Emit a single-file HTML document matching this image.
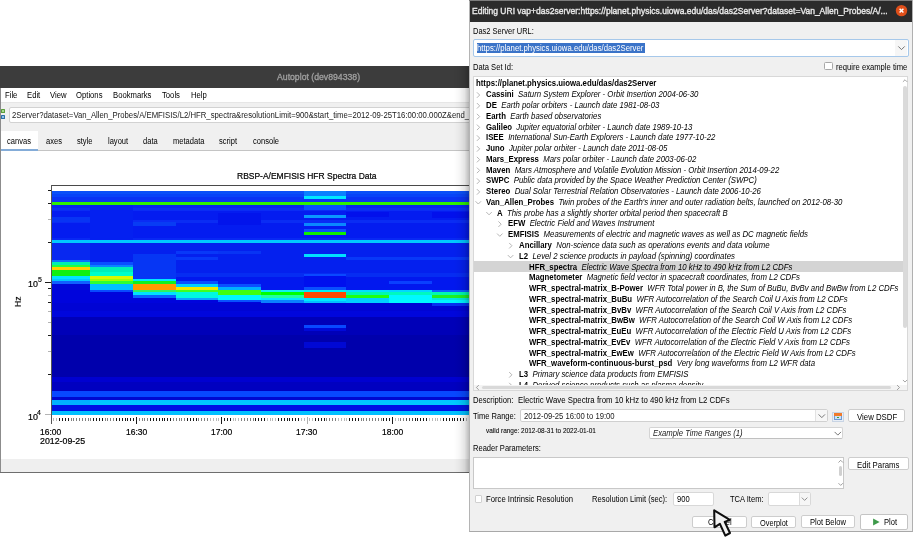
<!DOCTYPE html>
<html><head><meta charset="utf-8">
<style>
html,body{margin:0;padding:0;}
body{width:913px;height:538px;position:relative;overflow:hidden;background:#fff;font-family:"Liberation Sans",sans-serif;color:#1a1a1a;}
.a{position:absolute;}
.t{position:absolute;white-space:pre;will-change:transform;}
.t b{font-weight:bold;}
.t i{font-style:italic;}
</style></head><body>
<div class="a" style="left:0.00px;top:66.00px;width:470.00px;height:21.50px;background:#3c3c3c"></div>
<div class="t " style="left:277.40px;top:73.34px;font-size:8.7px;line-height:8.7px;transform:scaleY(1.08);transform-origin:0 7.36px;color:#a0a0a0;-webkit-text-stroke:0.3px #a0a0a0">Autoplot (dev894338)</div>
<div class="a" style="left:0.00px;top:87.50px;width:1.00px;height:385.00px;background:#8c8c8c"></div>
<div class="a" style="left:1.00px;top:87.50px;width:469.00px;height:14.50px;background:#ffffff"></div>
<div class="t " style="left:4.80px;top:92.18px;font-size:7.7px;line-height:7.7px;transform:scaleY(1.15);transform-origin:0 6.52px;color:#000">File</div>
<div class="t " style="left:26.80px;top:92.18px;font-size:7.7px;line-height:7.7px;transform:scaleY(1.15);transform-origin:0 6.52px;color:#000">Edit</div>
<div class="t " style="left:50.10px;top:92.18px;font-size:7.7px;line-height:7.7px;transform:scaleY(1.15);transform-origin:0 6.52px;color:#000">View</div>
<div class="t " style="left:76.40px;top:92.18px;font-size:7.7px;line-height:7.7px;transform:scaleY(1.15);transform-origin:0 6.52px;color:#000">Options</div>
<div class="t " style="left:113.00px;top:92.18px;font-size:7.7px;line-height:7.7px;transform:scaleY(1.15);transform-origin:0 6.52px;color:#000">Bookmarks</div>
<div class="t " style="left:162.30px;top:92.18px;font-size:7.7px;line-height:7.7px;transform:scaleY(1.15);transform-origin:0 6.52px;color:#000">Tools</div>
<div class="t " style="left:190.50px;top:92.18px;font-size:7.7px;line-height:7.7px;transform:scaleY(1.15);transform-origin:0 6.52px;color:#000">Help</div>
<div class="a" style="left:1.00px;top:102.00px;width:469.00px;height:1.00px;background:#e6e6e6"></div>
<div class="a" style="left:1.00px;top:103.00px;width:469.00px;height:28.00px;background:#f0f0f0"></div>
<div class="a" style="left:0.90px;top:109.00px;width:4.30px;height:4.10px;background:#5a9e3a;border-radius:0.5px"></div>
<div class="a" style="left:0.90px;top:115.00px;width:4.30px;height:3.70px;background:#2d6ea6;border-radius:0.5px"></div>
<div class="a" style="left:2.00px;top:110.10px;width:2.10px;height:1.90px;background:#a8d890"></div>
<div class="a" style="left:2.00px;top:116.00px;width:2.10px;height:1.70px;background:#8cc0e8"></div>
<div class="a" style="left:8.55px;top:107.00px;width:470.00px;height:15.60px;background:#fff;border:1px solid #d2d2d2;border-radius:2px;box-sizing:border-box"></div>
<div class="t " style="left:11.90px;top:112.24px;font-size:7.75px;line-height:7.75px;transform:scaleY(1.15);transform-origin:0 6.56px;color:#1a1a1a">2Server?dataset=Van_Allen_Probes/A/EMFISIS/L2/HFR_spectra&amp;resolutionLimit=900&amp;start_time=2012-09-25T16:00:00.000Z&amp;end_time=2012-09-25T19:00:00.000Z</div>
<div class="a" style="left:1.00px;top:130.90px;width:469.00px;height:19.50px;background:#f0f0f0"></div>
<div class="a" style="left:1.00px;top:130.90px;width:37.00px;height:18.10px;background:#fff"></div>
<div class="a" style="left:1.00px;top:149.00px;width:37.00px;height:1.80px;background:#84acd8"></div>
<div class="a" style="left:38.00px;top:150.00px;width:432.00px;height:1.00px;background:#c4c4c4"></div>
<div class="t " style="left:7.40px;top:138.11px;font-size:7.55px;line-height:7.55px;transform:scaleY(1.2);transform-origin:0 6.39px;color:#000">canvas</div>
<div class="t " style="left:45.50px;top:138.11px;font-size:7.55px;line-height:7.55px;transform:scaleY(1.2);transform-origin:0 6.39px;color:#000">axes</div>
<div class="t " style="left:76.70px;top:138.11px;font-size:7.55px;line-height:7.55px;transform:scaleY(1.2);transform-origin:0 6.39px;color:#000">style</div>
<div class="t " style="left:107.60px;top:138.11px;font-size:7.55px;line-height:7.55px;transform:scaleY(1.2);transform-origin:0 6.39px;color:#000">layout</div>
<div class="t " style="left:142.60px;top:138.11px;font-size:7.55px;line-height:7.55px;transform:scaleY(1.2);transform-origin:0 6.39px;color:#000">data</div>
<div class="t " style="left:172.80px;top:138.11px;font-size:7.55px;line-height:7.55px;transform:scaleY(1.2);transform-origin:0 6.39px;color:#000">metadata</div>
<div class="t " style="left:218.90px;top:138.11px;font-size:7.55px;line-height:7.55px;transform:scaleY(1.2);transform-origin:0 6.39px;color:#000">script</div>
<div class="t " style="left:252.50px;top:138.11px;font-size:7.55px;line-height:7.55px;transform:scaleY(1.2);transform-origin:0 6.39px;color:#000">console</div>
<div class="a" style="left:1.00px;top:458.70px;width:469.00px;height:13.20px;background:#efefef"></div>
<div class="a" style="left:0.00px;top:471.60px;width:470.00px;height:1.00px;background:#6e6e6e"></div>
<svg class="a" style="left:0;top:0" width="470" height="538" shape-rendering="crispEdges"><rect x="51.1" y="191" width="418.9" height="2.70" fill="#0a50f8"/>
<rect x="51.1" y="193.7" width="418.9" height="2.80" fill="#0844f8"/>
<rect x="51.1" y="196.5" width="418.9" height="5.50" fill="#0a34f4"/>
<rect x="51.1" y="202" width="418.9" height="3.00" fill="#30f000"/>
<rect x="51.1" y="205" width="418.9" height="3.00" fill="#0824f0"/>
<rect x="51.1" y="208" width="418.9" height="2.50" fill="#0a2cf4"/>
<rect x="51.1" y="210.5" width="418.9" height="9.50" fill="#041cf0"/>
<rect x="51.1" y="220" width="418.9" height="2.50" fill="#0a2cf4"/>
<rect x="51.1" y="222.5" width="418.9" height="15.50" fill="#041cf0"/>
<rect x="51.1" y="238" width="418.9" height="2.20" fill="#0828f4"/>
<rect x="51.1" y="240.2" width="418.9" height="2.90" fill="#00c8ff"/>
<rect x="51.1" y="243.1" width="418.9" height="29.90" fill="#0420ee"/>
<rect x="51.1" y="273" width="418.9" height="4.00" fill="#062cf2"/>
<rect x="51.1" y="277" width="418.9" height="13.00" fill="#0218ee"/>
<rect x="51.1" y="290" width="418.9" height="13.00" fill="#0004dc"/>
<rect x="51.1" y="303" width="418.9" height="8.00" fill="#0004d4"/>
<rect x="51.1" y="311" width="418.9" height="6.00" fill="#0006dc"/>
<rect x="51.1" y="317" width="418.9" height="18.00" fill="#0000b8"/>
<rect x="51.1" y="335" width="418.9" height="42.00" fill="#0000ac"/>
<rect x="51.1" y="377" width="418.9" height="5.40" fill="#0000d0"/>
<rect x="51.1" y="382.4" width="418.9" height="8.30" fill="#0000c0"/>
<rect x="51.1" y="390.7" width="418.9" height="6.30" fill="#0848ff"/>
<rect x="51.1" y="397" width="418.9" height="3.10" fill="#0008d0"/>
<rect x="51.1" y="400.1" width="418.9" height="5.20" fill="#00b0ff"/>
<rect x="51.1" y="405.3" width="418.9" height="5.20" fill="#0010e4"/>
<rect x="51.1" y="410.5" width="418.9" height="4.40" fill="#00c0ff"/>
<rect x="51.1" y="217" width="39.20" height="5.00" fill="#0834f4"/>
<rect x="51.1" y="243.1" width="39.20" height="16.90" fill="#0828f0"/>
<rect x="51.1" y="260" width="39.20" height="2.00" fill="#0a70ff"/>
<rect x="51.1" y="262" width="39.20" height="3.00" fill="#00f0b0"/>
<rect x="51.1" y="265" width="39.20" height="2.40" fill="#20ff40"/>
<rect x="51.1" y="267.4" width="39.20" height="3.00" fill="#ffd000"/>
<rect x="51.1" y="270.4" width="39.20" height="5.60" fill="#10f010"/>
<rect x="51.1" y="276" width="39.20" height="2.50" fill="#00e4ff"/>
<rect x="51.1" y="278.5" width="39.20" height="2.50" fill="#00c8ff"/>
<rect x="51.1" y="281" width="39.20" height="3.00" fill="#1060ff"/>
<rect x="51.1" y="284" width="39.20" height="6.00" fill="#0008d8"/>
<rect x="90.3" y="205" width="42.66" height="35.20" fill="#0420f0"/>
<rect x="90.3" y="262" width="42.66" height="2.60" fill="#0a50ff"/>
<rect x="90.3" y="264.6" width="42.66" height="2.60" fill="#0a84ff"/>
<rect x="90.3" y="267.2" width="42.66" height="4.80" fill="#00f0b8"/>
<rect x="90.3" y="272" width="42.66" height="4.00" fill="#00ffc8"/>
<rect x="90.3" y="276" width="42.66" height="3.00" fill="#d8f800"/>
<rect x="90.3" y="279" width="42.66" height="2.00" fill="#a0ff00"/>
<rect x="90.3" y="281" width="42.66" height="3.00" fill="#30ff30"/>
<rect x="90.3" y="284" width="42.66" height="5.50" fill="#00c0ff"/>
<rect x="90.3" y="289.5" width="42.66" height="2.50" fill="#0848ff"/>
<rect x="90.3" y="400.1" width="42.66" height="5.20" fill="#00c8ff"/>
<rect x="133.0" y="222.3" width="42.66" height="3.50" fill="#083cf4"/>
<rect x="133.0" y="254" width="42.66" height="24.60" fill="#0636f4"/>
<rect x="133.0" y="278.6" width="42.66" height="2.40" fill="#00e8ff"/>
<rect x="133.0" y="281" width="42.66" height="3.00" fill="#10f020"/>
<rect x="133.0" y="284" width="42.66" height="5.50" fill="#ff9800"/>
<rect x="133.0" y="289.5" width="42.66" height="2.50" fill="#30f060"/>
<rect x="133.0" y="292" width="42.66" height="3.00" fill="#00e0ff"/>
<rect x="133.0" y="295" width="42.66" height="3.00" fill="#0860ff"/>
<rect x="133.0" y="400.1" width="42.66" height="5.20" fill="#00c8ff"/>
<rect x="175.6" y="251" width="42.66" height="3.00" fill="#0838f8"/>
<rect x="175.6" y="257" width="42.66" height="2.60" fill="#0838f8"/>
<rect x="175.6" y="281.3" width="42.66" height="2.70" fill="#0850ff"/>
<rect x="175.6" y="284" width="42.66" height="2.80" fill="#00d0ff"/>
<rect x="175.6" y="286.8" width="42.66" height="3.50" fill="#f0e800"/>
<rect x="175.6" y="290.3" width="42.66" height="1.70" fill="#40ff20"/>
<rect x="175.6" y="292" width="42.66" height="6.40" fill="#00f8e0"/>
<rect x="175.6" y="298.4" width="42.66" height="2.00" fill="#0aa0ff"/>
<rect x="175.6" y="400.1" width="42.66" height="5.20" fill="#00c8ff"/>
<rect x="218.3" y="213" width="42.66" height="12.00" fill="#0214ec"/>
<rect x="218.3" y="251" width="42.66" height="3.00" fill="#0834f4"/>
<rect x="218.3" y="284" width="42.66" height="2.80" fill="#0a50ff"/>
<rect x="218.3" y="286.8" width="42.66" height="3.20" fill="#00b0ff"/>
<rect x="218.3" y="290" width="42.66" height="5.00" fill="#40ff10"/>
<rect x="218.3" y="295" width="42.66" height="4.70" fill="#00f8ff"/>
<rect x="218.3" y="299.7" width="42.66" height="2.30" fill="#0850ff"/>
<rect x="218.3" y="400.1" width="42.66" height="5.20" fill="#00c8ff"/>
<rect x="260.9" y="289.8" width="42.66" height="2.20" fill="#10f0f0"/>
<rect x="260.9" y="292" width="42.66" height="2.80" fill="#00ff00"/>
<rect x="260.9" y="294.8" width="42.66" height="3.20" fill="#20ffa0"/>
<rect x="260.9" y="298" width="42.66" height="2.00" fill="#00e8ff"/>
<rect x="260.9" y="300" width="42.66" height="3.00" fill="#0a80ff"/>
<rect x="260.9" y="400.1" width="42.66" height="5.20" fill="#00c8ff"/>
<rect x="303.6" y="191" width="42.66" height="5.00" fill="#0a80ff"/>
<rect x="303.6" y="196" width="42.66" height="3.00" fill="#00e8ff"/>
<rect x="303.6" y="205" width="42.66" height="5.00" fill="#0850ff"/>
<rect x="303.6" y="215" width="42.66" height="3.00" fill="#0a98ff"/>
<rect x="303.6" y="223" width="42.66" height="3.00" fill="#0a88ff"/>
<rect x="303.6" y="229" width="42.66" height="2.50" fill="#0a50ff"/>
<rect x="303.6" y="231.8" width="42.66" height="3.00" fill="#10f000"/>
<rect x="303.6" y="254" width="42.66" height="3.00" fill="#00e0ff"/>
<rect x="303.6" y="273.5" width="42.66" height="2.50" fill="#0a48ff"/>
<rect x="303.6" y="276" width="42.66" height="11.00" fill="#0010ee"/>
<rect x="303.6" y="287" width="42.66" height="2.60" fill="#0850ff"/>
<rect x="303.6" y="289.6" width="42.66" height="2.40" fill="#00f0f0"/>
<rect x="303.6" y="292" width="42.66" height="6.00" fill="#ff4800"/>
<rect x="303.6" y="298" width="42.66" height="2.50" fill="#00e8ff"/>
<rect x="303.6" y="300.5" width="42.66" height="2.70" fill="#00c0ff"/>
<rect x="303.6" y="325" width="42.66" height="3.00" fill="#0848ff"/>
<rect x="303.6" y="328" width="42.66" height="3.00" fill="#0008d8"/>
<rect x="303.6" y="341.7" width="42.66" height="6.10" fill="#0008d4"/>
<rect x="303.6" y="400.1" width="42.66" height="5.20" fill="#00c8ff"/>
<rect x="346.3" y="212" width="42.66" height="5.00" fill="#0210ec"/>
<rect x="346.3" y="257" width="42.66" height="3.00" fill="#0838f8"/>
<rect x="346.3" y="289.9" width="42.66" height="2.10" fill="#00e0ff"/>
<rect x="346.3" y="292" width="42.66" height="2.60" fill="#00f8b0"/>
<rect x="346.3" y="294.6" width="42.66" height="3.40" fill="#20ff10"/>
<rect x="346.3" y="298" width="42.66" height="4.70" fill="#00d0ff"/>
<rect x="346.3" y="400.1" width="42.66" height="5.20" fill="#00c8ff"/>
<rect x="388.9" y="257" width="42.66" height="3.00" fill="#0838f8"/>
<rect x="388.9" y="281.3" width="42.66" height="2.90" fill="#0a40ff"/>
<rect x="388.9" y="289.9" width="42.66" height="2.10" fill="#00d8ff"/>
<rect x="388.9" y="292" width="42.66" height="2.60" fill="#00f8c0"/>
<rect x="388.9" y="294.6" width="42.66" height="8.40" fill="#00f8ff"/>
<rect x="388.9" y="400.1" width="42.66" height="5.20" fill="#00c8ff"/>
<rect x="431.6" y="212" width="38.42" height="6.00" fill="#0210ec"/>
<rect x="431.6" y="257" width="38.42" height="3.00" fill="#0838f8"/>
<rect x="431.6" y="289.9" width="38.42" height="2.10" fill="#0a60ff"/>
<rect x="431.6" y="292" width="38.42" height="2.60" fill="#00f8b0"/>
<rect x="431.6" y="294.6" width="38.42" height="3.40" fill="#20f020"/>
<rect x="431.6" y="298" width="38.42" height="2.00" fill="#00e8e0"/>
<rect x="431.6" y="300" width="38.42" height="3.00" fill="#00f4ff"/>
<rect x="431.6" y="303" width="38.42" height="3.00" fill="#0630f0"/>
<rect x="431.6" y="400.1" width="38.42" height="5.20" fill="#00c8ff"/></svg>
<svg class="a" style="left:0;top:0" width="470" height="538"><line x1="51" y1="185.5" x2="470" y2="185.5" stroke="#4a4a4a" stroke-width="1"/>
<line x1="51.5" y1="185" x2="51.5" y2="424" stroke="#555" stroke-width="1"/>
<line x1="45" y1="414.5" x2="51" y2="414.5" stroke="#b4b4b4" stroke-width="1" shape-rendering="crispEdges"/>
<line x1="48" y1="374.5" x2="51" y2="374.5" stroke="#1a1a1a" stroke-width="1" shape-rendering="crispEdges"/>
<line x1="48" y1="351.5" x2="51" y2="351.5" stroke="#b4b4b4" stroke-width="1" shape-rendering="crispEdges"/>
<line x1="48" y1="335.5" x2="51" y2="335.5" stroke="#1a1a1a" stroke-width="1" shape-rendering="crispEdges"/>
<line x1="48" y1="322.5" x2="51" y2="322.5" stroke="#b4b4b4" stroke-width="1" shape-rendering="crispEdges"/>
<line x1="48" y1="311.5" x2="51" y2="311.5" stroke="#b4b4b4" stroke-width="1" shape-rendering="crispEdges"/>
<line x1="48" y1="302.5" x2="51" y2="302.5" stroke="#1a1a1a" stroke-width="1" shape-rendering="crispEdges"/>
<line x1="48" y1="295.5" x2="51" y2="295.5" stroke="#b4b4b4" stroke-width="1" shape-rendering="crispEdges"/>
<line x1="48" y1="288.5" x2="51" y2="288.5" stroke="#1a1a1a" stroke-width="1" shape-rendering="crispEdges"/>
<line x1="45" y1="282.5" x2="51" y2="282.5" stroke="#1a1a1a" stroke-width="1" shape-rendering="crispEdges"/>
<line x1="48" y1="242.5" x2="51" y2="242.5" stroke="#1a1a1a" stroke-width="1" shape-rendering="crispEdges"/>
<line x1="48" y1="219.5" x2="51" y2="219.5" stroke="#b4b4b4" stroke-width="1" shape-rendering="crispEdges"/>
<line x1="48" y1="203.5" x2="51" y2="203.5" stroke="#1a1a1a" stroke-width="1" shape-rendering="crispEdges"/>
<line x1="48" y1="190.5" x2="51" y2="190.5" stroke="#1a1a1a" stroke-width="1" shape-rendering="crispEdges"/>
<line x1="53.5" y1="418" x2="53.5" y2="421" stroke="#b8b8b8" stroke-width="1" shape-rendering="crispEdges"/>
<line x1="56.5" y1="418" x2="56.5" y2="421" stroke="#b8b8b8" stroke-width="1" shape-rendering="crispEdges"/>
<line x1="59.5" y1="418" x2="59.5" y2="421" stroke="#1a1a1a" stroke-width="1" shape-rendering="crispEdges"/>
<line x1="62.5" y1="418" x2="62.5" y2="421" stroke="#1a1a1a" stroke-width="1" shape-rendering="crispEdges"/>
<line x1="65.5" y1="418" x2="65.5" y2="421" stroke="#1a1a1a" stroke-width="1" shape-rendering="crispEdges"/>
<line x1="68.5" y1="418" x2="68.5" y2="421" stroke="#1a1a1a" stroke-width="1" shape-rendering="crispEdges"/>
<line x1="71.5" y1="418" x2="71.5" y2="421" stroke="#808080" stroke-width="1" shape-rendering="crispEdges"/>
<line x1="73.5" y1="418" x2="73.5" y2="421" stroke="#808080" stroke-width="1" shape-rendering="crispEdges"/>
<line x1="76.5" y1="418" x2="76.5" y2="421" stroke="#808080" stroke-width="1" shape-rendering="crispEdges"/>
<line x1="79.5" y1="418" x2="79.5" y2="421" stroke="#808080" stroke-width="1" shape-rendering="crispEdges"/>
<line x1="82.5" y1="418" x2="82.5" y2="421" stroke="#808080" stroke-width="1" shape-rendering="crispEdges"/>
<line x1="85.5" y1="418" x2="85.5" y2="421" stroke="#808080" stroke-width="1" shape-rendering="crispEdges"/>
<line x1="88.5" y1="418" x2="88.5" y2="421" stroke="#808080" stroke-width="1" shape-rendering="crispEdges"/>
<line x1="90.5" y1="418" x2="90.5" y2="421" stroke="#808080" stroke-width="1" shape-rendering="crispEdges"/>
<line x1="93.5" y1="418" x2="93.5" y2="421" stroke="#1a1a1a" stroke-width="1" shape-rendering="crispEdges"/>
<line x1="96.5" y1="418" x2="96.5" y2="421" stroke="#1a1a1a" stroke-width="1" shape-rendering="crispEdges"/>
<line x1="99.5" y1="418" x2="99.5" y2="421" stroke="#1a1a1a" stroke-width="1" shape-rendering="crispEdges"/>
<line x1="102.5" y1="418" x2="102.5" y2="421" stroke="#1a1a1a" stroke-width="1" shape-rendering="crispEdges"/>
<line x1="105.5" y1="418" x2="105.5" y2="421" stroke="#808080" stroke-width="1" shape-rendering="crispEdges"/>
<line x1="107.5" y1="418" x2="107.5" y2="421" stroke="#808080" stroke-width="1" shape-rendering="crispEdges"/>
<line x1="110.5" y1="418" x2="110.5" y2="421" stroke="#808080" stroke-width="1" shape-rendering="crispEdges"/>
<line x1="113.5" y1="418" x2="113.5" y2="421" stroke="#808080" stroke-width="1" shape-rendering="crispEdges"/>
<line x1="116.5" y1="418" x2="116.5" y2="421" stroke="#1a1a1a" stroke-width="1" shape-rendering="crispEdges"/>
<line x1="119.5" y1="418" x2="119.5" y2="421" stroke="#1a1a1a" stroke-width="1" shape-rendering="crispEdges"/>
<line x1="122.5" y1="418" x2="122.5" y2="421" stroke="#1a1a1a" stroke-width="1" shape-rendering="crispEdges"/>
<line x1="125.5" y1="418" x2="125.5" y2="421" stroke="#1a1a1a" stroke-width="1" shape-rendering="crispEdges"/>
<line x1="127.5" y1="418" x2="127.5" y2="421" stroke="#1a1a1a" stroke-width="1" shape-rendering="crispEdges"/>
<line x1="130.5" y1="418" x2="130.5" y2="421" stroke="#1a1a1a" stroke-width="1" shape-rendering="crispEdges"/>
<line x1="133.5" y1="418" x2="133.5" y2="421" stroke="#1a1a1a" stroke-width="1" shape-rendering="crispEdges"/>
<line x1="136.5" y1="417" x2="136.5" y2="424" stroke="#1a1a1a" stroke-width="1" shape-rendering="crispEdges"/>
<line x1="139.5" y1="418" x2="139.5" y2="421" stroke="#808080" stroke-width="1" shape-rendering="crispEdges"/>
<line x1="142.5" y1="418" x2="142.5" y2="421" stroke="#808080" stroke-width="1" shape-rendering="crispEdges"/>
<line x1="144.5" y1="418" x2="144.5" y2="421" stroke="#808080" stroke-width="1" shape-rendering="crispEdges"/>
<line x1="147.5" y1="418" x2="147.5" y2="421" stroke="#808080" stroke-width="1" shape-rendering="crispEdges"/>
<line x1="150.5" y1="418" x2="150.5" y2="421" stroke="#1a1a1a" stroke-width="1" shape-rendering="crispEdges"/>
<line x1="153.5" y1="418" x2="153.5" y2="421" stroke="#1a1a1a" stroke-width="1" shape-rendering="crispEdges"/>
<line x1="156.5" y1="418" x2="156.5" y2="421" stroke="#1a1a1a" stroke-width="1" shape-rendering="crispEdges"/>
<line x1="159.5" y1="418" x2="159.5" y2="421" stroke="#1a1a1a" stroke-width="1" shape-rendering="crispEdges"/>
<line x1="162.5" y1="418" x2="162.5" y2="421" stroke="#1a1a1a" stroke-width="1" shape-rendering="crispEdges"/>
<line x1="164.5" y1="418" x2="164.5" y2="421" stroke="#1a1a1a" stroke-width="1" shape-rendering="crispEdges"/>
<line x1="167.5" y1="418" x2="167.5" y2="421" stroke="#1a1a1a" stroke-width="1" shape-rendering="crispEdges"/>
<line x1="170.5" y1="418" x2="170.5" y2="421" stroke="#1a1a1a" stroke-width="1" shape-rendering="crispEdges"/>
<line x1="173.5" y1="418" x2="173.5" y2="421" stroke="#808080" stroke-width="1" shape-rendering="crispEdges"/>
<line x1="176.5" y1="418" x2="176.5" y2="421" stroke="#808080" stroke-width="1" shape-rendering="crispEdges"/>
<line x1="179.5" y1="418" x2="179.5" y2="421" stroke="#808080" stroke-width="1" shape-rendering="crispEdges"/>
<line x1="181.5" y1="418" x2="181.5" y2="421" stroke="#808080" stroke-width="1" shape-rendering="crispEdges"/>
<line x1="184.5" y1="418" x2="184.5" y2="421" stroke="#808080" stroke-width="1" shape-rendering="crispEdges"/>
<line x1="187.5" y1="418" x2="187.5" y2="421" stroke="#1a1a1a" stroke-width="1" shape-rendering="crispEdges"/>
<line x1="190.5" y1="418" x2="190.5" y2="421" stroke="#1a1a1a" stroke-width="1" shape-rendering="crispEdges"/>
<line x1="193.5" y1="418" x2="193.5" y2="421" stroke="#1a1a1a" stroke-width="1" shape-rendering="crispEdges"/>
<line x1="196.5" y1="418" x2="196.5" y2="421" stroke="#1a1a1a" stroke-width="1" shape-rendering="crispEdges"/>
<line x1="198.5" y1="418" x2="198.5" y2="421" stroke="#808080" stroke-width="1" shape-rendering="crispEdges"/>
<line x1="201.5" y1="418" x2="201.5" y2="421" stroke="#808080" stroke-width="1" shape-rendering="crispEdges"/>
<line x1="204.5" y1="418" x2="204.5" y2="421" stroke="#808080" stroke-width="1" shape-rendering="crispEdges"/>
<line x1="207.5" y1="418" x2="207.5" y2="421" stroke="#808080" stroke-width="1" shape-rendering="crispEdges"/>
<line x1="210.5" y1="418" x2="210.5" y2="421" stroke="#b8b8b8" stroke-width="1" shape-rendering="crispEdges"/>
<line x1="213.5" y1="418" x2="213.5" y2="421" stroke="#b8b8b8" stroke-width="1" shape-rendering="crispEdges"/>
<line x1="216.5" y1="418" x2="216.5" y2="421" stroke="#b8b8b8" stroke-width="1" shape-rendering="crispEdges"/>
<line x1="218.5" y1="418" x2="218.5" y2="421" stroke="#b8b8b8" stroke-width="1" shape-rendering="crispEdges"/>
<line x1="221.5" y1="417" x2="221.5" y2="424" stroke="#1a1a1a" stroke-width="1" shape-rendering="crispEdges"/>
<line x1="224.5" y1="418" x2="224.5" y2="421" stroke="#1a1a1a" stroke-width="1" shape-rendering="crispEdges"/>
<line x1="227.5" y1="418" x2="227.5" y2="421" stroke="#1a1a1a" stroke-width="1" shape-rendering="crispEdges"/>
<line x1="230.5" y1="418" x2="230.5" y2="421" stroke="#1a1a1a" stroke-width="1" shape-rendering="crispEdges"/>
<line x1="233.5" y1="418" x2="233.5" y2="421" stroke="#b8b8b8" stroke-width="1" shape-rendering="crispEdges"/>
<line x1="235.5" y1="418" x2="235.5" y2="421" stroke="#b8b8b8" stroke-width="1" shape-rendering="crispEdges"/>
<line x1="238.5" y1="418" x2="238.5" y2="421" stroke="#b8b8b8" stroke-width="1" shape-rendering="crispEdges"/>
<line x1="241.5" y1="418" x2="241.5" y2="421" stroke="#808080" stroke-width="1" shape-rendering="crispEdges"/>
<line x1="244.5" y1="418" x2="244.5" y2="421" stroke="#808080" stroke-width="1" shape-rendering="crispEdges"/>
<line x1="247.5" y1="418" x2="247.5" y2="421" stroke="#808080" stroke-width="1" shape-rendering="crispEdges"/>
<line x1="250.5" y1="418" x2="250.5" y2="421" stroke="#808080" stroke-width="1" shape-rendering="crispEdges"/>
<line x1="253.5" y1="418" x2="253.5" y2="421" stroke="#808080" stroke-width="1" shape-rendering="crispEdges"/>
<line x1="255.5" y1="418" x2="255.5" y2="421" stroke="#1a1a1a" stroke-width="1" shape-rendering="crispEdges"/>
<line x1="258.5" y1="418" x2="258.5" y2="421" stroke="#1a1a1a" stroke-width="1" shape-rendering="crispEdges"/>
<line x1="261.5" y1="418" x2="261.5" y2="421" stroke="#1a1a1a" stroke-width="1" shape-rendering="crispEdges"/>
<line x1="264.5" y1="418" x2="264.5" y2="421" stroke="#1a1a1a" stroke-width="1" shape-rendering="crispEdges"/>
<line x1="267.5" y1="418" x2="267.5" y2="421" stroke="#b8b8b8" stroke-width="1" shape-rendering="crispEdges"/>
<line x1="270.5" y1="418" x2="270.5" y2="421" stroke="#b8b8b8" stroke-width="1" shape-rendering="crispEdges"/>
<line x1="272.5" y1="418" x2="272.5" y2="421" stroke="#b8b8b8" stroke-width="1" shape-rendering="crispEdges"/>
<line x1="275.5" y1="418" x2="275.5" y2="421" stroke="#b8b8b8" stroke-width="1" shape-rendering="crispEdges"/>
<line x1="278.5" y1="418" x2="278.5" y2="421" stroke="#1a1a1a" stroke-width="1" shape-rendering="crispEdges"/>
<line x1="281.5" y1="418" x2="281.5" y2="421" stroke="#1a1a1a" stroke-width="1" shape-rendering="crispEdges"/>
<line x1="284.5" y1="418" x2="284.5" y2="421" stroke="#1a1a1a" stroke-width="1" shape-rendering="crispEdges"/>
<line x1="287.5" y1="418" x2="287.5" y2="421" stroke="#1a1a1a" stroke-width="1" shape-rendering="crispEdges"/>
<line x1="289.5" y1="418" x2="289.5" y2="421" stroke="#1a1a1a" stroke-width="1" shape-rendering="crispEdges"/>
<line x1="292.5" y1="418" x2="292.5" y2="421" stroke="#1a1a1a" stroke-width="1" shape-rendering="crispEdges"/>
<line x1="295.5" y1="418" x2="295.5" y2="421" stroke="#1a1a1a" stroke-width="1" shape-rendering="crispEdges"/>
<line x1="298.5" y1="418" x2="298.5" y2="421" stroke="#1a1a1a" stroke-width="1" shape-rendering="crispEdges"/>
<line x1="301.5" y1="418" x2="301.5" y2="421" stroke="#b8b8b8" stroke-width="1" shape-rendering="crispEdges"/>
<line x1="304.5" y1="418" x2="304.5" y2="421" stroke="#b8b8b8" stroke-width="1" shape-rendering="crispEdges"/>
<line x1="307.5" y1="417" x2="307.5" y2="424" stroke="#b0b0b0" stroke-width="1" shape-rendering="crispEdges"/>
<line x1="309.5" y1="418" x2="309.5" y2="421" stroke="#b8b8b8" stroke-width="1" shape-rendering="crispEdges"/>
<line x1="312.5" y1="418" x2="312.5" y2="421" stroke="#b8b8b8" stroke-width="1" shape-rendering="crispEdges"/>
<line x1="315.5" y1="418" x2="315.5" y2="421" stroke="#1a1a1a" stroke-width="1" shape-rendering="crispEdges"/>
<line x1="318.5" y1="418" x2="318.5" y2="421" stroke="#1a1a1a" stroke-width="1" shape-rendering="crispEdges"/>
<line x1="321.5" y1="418" x2="321.5" y2="421" stroke="#1a1a1a" stroke-width="1" shape-rendering="crispEdges"/>
<line x1="324.5" y1="418" x2="324.5" y2="421" stroke="#1a1a1a" stroke-width="1" shape-rendering="crispEdges"/>
<line x1="326.5" y1="418" x2="326.5" y2="421" stroke="#808080" stroke-width="1" shape-rendering="crispEdges"/>
<line x1="329.5" y1="418" x2="329.5" y2="421" stroke="#808080" stroke-width="1" shape-rendering="crispEdges"/>
<line x1="332.5" y1="418" x2="332.5" y2="421" stroke="#808080" stroke-width="1" shape-rendering="crispEdges"/>
<line x1="335.5" y1="418" x2="335.5" y2="421" stroke="#808080" stroke-width="1" shape-rendering="crispEdges"/>
<line x1="338.5" y1="418" x2="338.5" y2="421" stroke="#b8b8b8" stroke-width="1" shape-rendering="crispEdges"/>
<line x1="341.5" y1="418" x2="341.5" y2="421" stroke="#b8b8b8" stroke-width="1" shape-rendering="crispEdges"/>
<line x1="344.5" y1="418" x2="344.5" y2="421" stroke="#b8b8b8" stroke-width="1" shape-rendering="crispEdges"/>
<line x1="346.5" y1="418" x2="346.5" y2="421" stroke="#b8b8b8" stroke-width="1" shape-rendering="crispEdges"/>
<line x1="349.5" y1="418" x2="349.5" y2="421" stroke="#1a1a1a" stroke-width="1" shape-rendering="crispEdges"/>
<line x1="352.5" y1="418" x2="352.5" y2="421" stroke="#1a1a1a" stroke-width="1" shape-rendering="crispEdges"/>
<line x1="355.5" y1="418" x2="355.5" y2="421" stroke="#1a1a1a" stroke-width="1" shape-rendering="crispEdges"/>
<line x1="358.5" y1="418" x2="358.5" y2="421" stroke="#1a1a1a" stroke-width="1" shape-rendering="crispEdges"/>
<line x1="361.5" y1="418" x2="361.5" y2="421" stroke="#808080" stroke-width="1" shape-rendering="crispEdges"/>
<line x1="363.5" y1="418" x2="363.5" y2="421" stroke="#808080" stroke-width="1" shape-rendering="crispEdges"/>
<line x1="366.5" y1="418" x2="366.5" y2="421" stroke="#808080" stroke-width="1" shape-rendering="crispEdges"/>
<line x1="369.5" y1="418" x2="369.5" y2="421" stroke="#808080" stroke-width="1" shape-rendering="crispEdges"/>
<line x1="372.5" y1="418" x2="372.5" y2="421" stroke="#808080" stroke-width="1" shape-rendering="crispEdges"/>
<line x1="375.5" y1="418" x2="375.5" y2="421" stroke="#808080" stroke-width="1" shape-rendering="crispEdges"/>
<line x1="378.5" y1="418" x2="378.5" y2="421" stroke="#808080" stroke-width="1" shape-rendering="crispEdges"/>
<line x1="381.5" y1="418" x2="381.5" y2="421" stroke="#808080" stroke-width="1" shape-rendering="crispEdges"/>
<line x1="383.5" y1="418" x2="383.5" y2="421" stroke="#1a1a1a" stroke-width="1" shape-rendering="crispEdges"/>
<line x1="386.5" y1="418" x2="386.5" y2="421" stroke="#1a1a1a" stroke-width="1" shape-rendering="crispEdges"/>
<line x1="389.5" y1="418" x2="389.5" y2="421" stroke="#1a1a1a" stroke-width="1" shape-rendering="crispEdges"/>
<line x1="392.5" y1="417" x2="392.5" y2="424" stroke="#1a1a1a" stroke-width="1" shape-rendering="crispEdges"/>
<line x1="395.5" y1="418" x2="395.5" y2="421" stroke="#b8b8b8" stroke-width="1" shape-rendering="crispEdges"/>
<line x1="398.5" y1="418" x2="398.5" y2="421" stroke="#b8b8b8" stroke-width="1" shape-rendering="crispEdges"/>
<line x1="400.5" y1="418" x2="400.5" y2="421" stroke="#808080" stroke-width="1" shape-rendering="crispEdges"/>
<line x1="403.5" y1="418" x2="403.5" y2="421" stroke="#808080" stroke-width="1" shape-rendering="crispEdges"/>
<line x1="406.5" y1="418" x2="406.5" y2="421" stroke="#505050" stroke-width="1" shape-rendering="crispEdges"/>
<line x1="409.5" y1="418" x2="409.5" y2="421" stroke="#505050" stroke-width="1" shape-rendering="crispEdges"/>
<line x1="412.5" y1="418" x2="412.5" y2="421" stroke="#505050" stroke-width="1" shape-rendering="crispEdges"/>
<line x1="415.5" y1="418" x2="415.5" y2="421" stroke="#1a1a1a" stroke-width="1" shape-rendering="crispEdges"/>
<line x1="417.5" y1="418" x2="417.5" y2="421" stroke="#1a1a1a" stroke-width="1" shape-rendering="crispEdges"/>
<line x1="420.5" y1="418" x2="420.5" y2="421" stroke="#1a1a1a" stroke-width="1" shape-rendering="crispEdges"/>
<line x1="423.5" y1="418" x2="423.5" y2="421" stroke="#1a1a1a" stroke-width="1" shape-rendering="crispEdges"/>
<line x1="426.5" y1="418" x2="426.5" y2="421" stroke="#1a1a1a" stroke-width="1" shape-rendering="crispEdges"/>
<line x1="429.5" y1="418" x2="429.5" y2="421" stroke="#b8b8b8" stroke-width="1" shape-rendering="crispEdges"/>
<line x1="432.5" y1="418" x2="432.5" y2="421" stroke="#b8b8b8" stroke-width="1" shape-rendering="crispEdges"/>
<line x1="435.5" y1="418" x2="435.5" y2="421" stroke="#b8b8b8" stroke-width="1" shape-rendering="crispEdges"/>
<line x1="437.5" y1="418" x2="437.5" y2="421" stroke="#b8b8b8" stroke-width="1" shape-rendering="crispEdges"/>
<line x1="440.5" y1="418" x2="440.5" y2="421" stroke="#b8b8b8" stroke-width="1" shape-rendering="crispEdges"/>
<line x1="443.5" y1="418" x2="443.5" y2="421" stroke="#1a1a1a" stroke-width="1" shape-rendering="crispEdges"/>
<line x1="446.5" y1="418" x2="446.5" y2="421" stroke="#1a1a1a" stroke-width="1" shape-rendering="crispEdges"/>
<line x1="449.5" y1="418" x2="449.5" y2="421" stroke="#1a1a1a" stroke-width="1" shape-rendering="crispEdges"/>
<line x1="452.5" y1="418" x2="452.5" y2="421" stroke="#1a1a1a" stroke-width="1" shape-rendering="crispEdges"/>
<line x1="454.5" y1="418" x2="454.5" y2="421" stroke="#1a1a1a" stroke-width="1" shape-rendering="crispEdges"/>
<line x1="457.5" y1="418" x2="457.5" y2="421" stroke="#1a1a1a" stroke-width="1" shape-rendering="crispEdges"/>
<line x1="460.5" y1="418" x2="460.5" y2="421" stroke="#1a1a1a" stroke-width="1" shape-rendering="crispEdges"/>
<line x1="463.5" y1="418" x2="463.5" y2="421" stroke="#1a1a1a" stroke-width="1" shape-rendering="crispEdges"/>
<line x1="466.5" y1="418" x2="466.5" y2="421" stroke="#b8b8b8" stroke-width="1" shape-rendering="crispEdges"/>
<line x1="469.5" y1="418" x2="469.5" y2="421" stroke="#b8b8b8" stroke-width="1" shape-rendering="crispEdges"/></svg>
<div class="t " style="left:236.70px;top:172.01px;font-size:8.49px;line-height:8.49px;transform:scaleY(1.1);transform-origin:0 7.19px;color:#000;-webkit-text-stroke:0.2px #000">RBSP-A/EMFISIS HFR Spectra Data</div>
<div class="t " style="left:27.80px;top:413.07px;font-size:8.9px;line-height:8.9px;transform:scaleY(1.1);transform-origin:0 7.53px;color:#000;-webkit-text-stroke:0.2px #000">10</div>
<div class="t " style="left:37.20px;top:408.77px;font-size:7.0px;line-height:7.0px;transform:scaleY(1.1);transform-origin:0 5.93px;color:#000;-webkit-text-stroke:0.15px #000">4</div>
<div class="t " style="left:27.90px;top:280.37px;font-size:8.9px;line-height:8.9px;transform:scaleY(1.1);transform-origin:0 7.53px;color:#000;-webkit-text-stroke:0.2px #000">10</div>
<div class="t " style="left:37.90px;top:276.27px;font-size:7.0px;line-height:7.0px;transform:scaleY(1.1);transform-origin:0 5.93px;color:#000;-webkit-text-stroke:0.15px #000">5</div>
<div class="t" style="left:13.0px;top:306.8px;font-size:8.6px;line-height:8.6px;color:#000;-webkit-text-stroke:0.2px #000;transform:rotate(-90deg) scaleY(1.1);transform-origin:0 0;">Hz</div>
<div class="t " style="left:40.40px;top:427.90px;font-size:8.51px;line-height:8.51px;transform:scaleY(1.1);transform-origin:0 7.20px;color:#000;-webkit-text-stroke:0.2px #000">16:00</div>
<div class="t " style="left:125.70px;top:427.90px;font-size:8.51px;line-height:8.51px;transform:scaleY(1.1);transform-origin:0 7.20px;color:#000;-webkit-text-stroke:0.2px #000">16:30</div>
<div class="t " style="left:211.00px;top:427.90px;font-size:8.51px;line-height:8.51px;transform:scaleY(1.1);transform-origin:0 7.20px;color:#000;-webkit-text-stroke:0.2px #000">17:00</div>
<div class="t " style="left:296.20px;top:427.90px;font-size:8.51px;line-height:8.51px;transform:scaleY(1.1);transform-origin:0 7.20px;color:#000;-webkit-text-stroke:0.2px #000">17:30</div>
<div class="t " style="left:381.60px;top:427.90px;font-size:8.51px;line-height:8.51px;transform:scaleY(1.1);transform-origin:0 7.20px;color:#000;-webkit-text-stroke:0.2px #000">18:00</div>
<div class="t " style="left:40.40px;top:436.73px;font-size:8.82px;line-height:8.82px;transform:scaleY(1.05);transform-origin:0 7.47px;color:#000;-webkit-text-stroke:0.2px #000">2012-09-25</div>
<div class="a" style="left:454.00px;top:66.00px;width:15.00px;height:406.60px;background:linear-gradient(to right, rgba(0,0,0,0) 0%, rgba(0,0,0,0.03) 35%, rgba(0,0,0,0.10) 70%, rgba(0,0,0,0.26) 100%)"></div>
<div class="a" style="left:469.00px;top:0.00px;width:444.00px;height:531.50px;background:#f0f0f0;border-left:1px solid #b4b4b4;border-right:1px solid #b0b0b0;border-bottom:1px solid #a8a8a8;box-sizing:border-box"></div>
<div class="a" style="left:470.00px;top:0.00px;width:441.50px;height:21.70px;background:#2b2b2b"></div>
<div class="a" style="left:469.00px;top:0.00px;width:443.00px;height:1.00px;background:#7c7c7c"></div>
<div class="t " style="left:471.70px;top:7.20px;font-size:8.5px;line-height:8.5px;transform:scaleY(1.12);transform-origin:0 7.20px;color:#e8e8e8;-webkit-text-stroke:0.35px #e8e8e8">Editing URI vap+das2server:https://planet.physics.uiowa.edu/das/das2Server?dataset=Van_Allen_Probes/A/...</div>
<svg class="a" style="left:890px;top:0" width="22" height="22"><circle cx="11.5" cy="10.6" r="5.7" fill="#df4f1a"/><path d="M9.6 8.7 L13.4 12.5 M13.4 8.7 L9.6 12.5" stroke="#fff" stroke-width="1.5"/></svg>
<div class="t " style="left:473.20px;top:28.04px;font-size:7.51px;line-height:7.51px;transform:scaleY(1.15);transform-origin:0 6.36px;color:#000">Das2 Server URL:</div>
<div class="a" style="left:473.20px;top:39.20px;width:435.40px;height:18.00px;background:#fff;border:1px solid #a6c8ea;border-radius:2px;box-sizing:border-box"></div>
<div class="a" style="left:895.30px;top:40.30px;width:12.10px;height:15.90px;background:#f6f6f6"></div>
<div class="a" style="left:476.90px;top:43.20px;width:168.00px;height:9.60px;background:#3a73c8"></div>
<div class="t " style="left:477.20px;top:44.84px;font-size:7.75px;line-height:7.75px;transform:scaleY(1.15);transform-origin:0 6.56px;color:#fff">https://planet.physics.uiowa.edu/das/das2Server</div>
<div class="t " style="left:473.20px;top:64.18px;font-size:7.59px;line-height:7.59px;transform:scaleY(1.15);transform-origin:0 6.42px;color:#000">Data Set Id:</div>
<div class="a" style="left:824.40px;top:62.40px;width:8.40px;height:8.10px;background:#fff;border:1px solid #a8a8a8;border-radius:1.5px;box-sizing:border-box"></div>
<div class="t " style="left:835.60px;top:63.92px;font-size:7.65px;line-height:7.65px;transform:scaleY(1.15);transform-origin:0 6.48px;color:#000">require example time</div>
<div class="a" style="left:473.20px;top:76.10px;width:435.20px;height:314.80px;background:#fff;border:1px solid #d8d8d8;box-sizing:border-box"></div>
<div class="a" style="left:474.2px;top:77.6px;width:433.2px;height:307px;overflow:hidden"><div class="a" style="left:0.00px;top:183.50px;width:428.50px;height:10.60px;background:#d4d4d4"></div><div class="t " style="left:1.70px;top:2.40px;font-size:7.8px;line-height:7.8px;transform:scaleY(1.08);transform-origin:0 6.60px;font-weight:bold;color:#000">https://planet.physics.uiowa.edu/das/das2Server</div><div class="t " style="left:12.20px;top:13.76px;font-size:7.8px;line-height:7.8px;transform:scaleY(1.08);transform-origin:0 6.60px;color:#000"><b>Cassini</b>&nbsp; <i>Saturn System Explorer - Orbit Insertion 2004-06-30</i></div><div class="t " style="left:12.20px;top:24.52px;font-size:7.8px;line-height:7.8px;transform:scaleY(1.08);transform-origin:0 6.60px;color:#000"><b>DE</b>&nbsp; <i>Earth polar orbiters - Launch date 1981-08-03</i></div><div class="t " style="left:12.20px;top:35.28px;font-size:7.8px;line-height:7.8px;transform:scaleY(1.08);transform-origin:0 6.60px;color:#000"><b>Earth</b>&nbsp; <i>Earth based observatories</i></div><div class="t " style="left:12.20px;top:46.04px;font-size:7.8px;line-height:7.8px;transform:scaleY(1.08);transform-origin:0 6.60px;color:#000"><b>Galileo</b>&nbsp; <i>Jupiter equatorial orbiter - Launch date 1989-10-13</i></div><div class="t " style="left:12.20px;top:56.80px;font-size:7.8px;line-height:7.8px;transform:scaleY(1.08);transform-origin:0 6.60px;color:#000"><b>ISEE</b>&nbsp; <i>International Sun-Earth Explorers - Launch date 1977-10-22</i></div><div class="t " style="left:12.20px;top:67.56px;font-size:7.8px;line-height:7.8px;transform:scaleY(1.08);transform-origin:0 6.60px;color:#000"><b>Juno</b>&nbsp; <i>Jupiter polar orbiter - Launch date 2011-08-05</i></div><div class="t " style="left:12.20px;top:78.32px;font-size:7.8px;line-height:7.8px;transform:scaleY(1.08);transform-origin:0 6.60px;color:#000"><b>Mars_Express</b>&nbsp; <i>Mars polar orbiter - Launch date 2003-06-02</i></div><div class="t " style="left:12.20px;top:89.08px;font-size:7.8px;line-height:7.8px;transform:scaleY(1.08);transform-origin:0 6.60px;color:#000"><b>Maven</b>&nbsp; <i>Mars Atmosphere and Volatile Evolution Mission - Orbit Insertion 2014-09-22</i></div><div class="t " style="left:12.20px;top:99.84px;font-size:7.8px;line-height:7.8px;transform:scaleY(1.08);transform-origin:0 6.60px;color:#000"><b>SWPC</b>&nbsp; <i>Public data provided by the Space Weather Prediction Center (SWPC)</i></div><div class="t " style="left:12.20px;top:110.60px;font-size:7.8px;line-height:7.8px;transform:scaleY(1.08);transform-origin:0 6.60px;color:#000"><b>Stereo</b>&nbsp; <i>Dual Solar Terrestrial Relation Observatories - Launch date 2006-10-26</i></div><div class="t " style="left:12.20px;top:121.36px;font-size:7.8px;line-height:7.8px;transform:scaleY(1.08);transform-origin:0 6.60px;color:#000"><b>Van_Allen_Probes</b>&nbsp; <i>Twin probes of the Earth's inner and outer radiation belts, launched on 2012-08-30</i></div><div class="t " style="left:22.95px;top:132.12px;font-size:7.8px;line-height:7.8px;transform:scaleY(1.08);transform-origin:0 6.60px;color:#000"><b>A</b>&nbsp; <i>This probe has a slightly shorter orbital period then spacecraft B</i></div><div class="t " style="left:33.70px;top:142.88px;font-size:7.8px;line-height:7.8px;transform:scaleY(1.08);transform-origin:0 6.60px;color:#000"><b>EFW</b>&nbsp; <i>Electric Field and Waves Instrument</i></div><div class="t " style="left:33.70px;top:153.64px;font-size:7.8px;line-height:7.8px;transform:scaleY(1.08);transform-origin:0 6.60px;color:#000"><b>EMFISIS</b>&nbsp; <i>Measurements of electric and magnetic waves as well as DC magnetic fields</i></div><div class="t " style="left:44.45px;top:164.40px;font-size:7.8px;line-height:7.8px;transform:scaleY(1.08);transform-origin:0 6.60px;color:#000"><b>Ancillary</b>&nbsp; <i>Non-science data such as operations events and data volume</i></div><div class="t " style="left:44.45px;top:175.16px;font-size:7.8px;line-height:7.8px;transform:scaleY(1.08);transform-origin:0 6.60px;color:#000"><b>L2</b>&nbsp; <i>Level 2 science products in payload (spinning) coordinates</i></div><div class="t " style="left:55.20px;top:185.92px;font-size:7.8px;line-height:7.8px;transform:scaleY(1.08);transform-origin:0 6.60px;color:#000"><b>HFR_spectra</b>&nbsp; <i>Electric Wave Spectra from 10 kHz to 490 kHz from L2 CDFs</i></div><div class="t " style="left:55.20px;top:196.68px;font-size:7.8px;line-height:7.8px;transform:scaleY(1.08);transform-origin:0 6.60px;color:#000"><b>Magnetometer</b>&nbsp; <i>Magnetic field vector in spacecraft coordinates, from L2 CDFs</i></div><div class="t " style="left:55.20px;top:207.44px;font-size:7.8px;line-height:7.8px;transform:scaleY(1.08);transform-origin:0 6.60px;color:#000"><b>WFR_spectral-matrix_B-Power</b>&nbsp; <i>WFR Total power in B, the Sum of BuBu, BvBv and BwBw from L2 CDFs</i></div><div class="t " style="left:55.20px;top:218.20px;font-size:7.8px;line-height:7.8px;transform:scaleY(1.08);transform-origin:0 6.60px;color:#000"><b>WFR_spectral-matrix_BuBu</b>&nbsp; <i>WFR Autocorrelation of the Search Coil U Axis from L2 CDFs</i></div><div class="t " style="left:55.20px;top:228.96px;font-size:7.8px;line-height:7.8px;transform:scaleY(1.08);transform-origin:0 6.60px;color:#000"><b>WFR_spectral-matrix_BvBv</b>&nbsp; <i>WFR Autocorrelation of the Search Coil V Axis from L2 CDFs</i></div><div class="t " style="left:55.20px;top:239.72px;font-size:7.8px;line-height:7.8px;transform:scaleY(1.08);transform-origin:0 6.60px;color:#000"><b>WFR_spectral-matrix_BwBw</b>&nbsp; <i>WFR Autocorrelation of the Search Coil W Axis from L2 CDFs</i></div><div class="t " style="left:55.20px;top:250.48px;font-size:7.8px;line-height:7.8px;transform:scaleY(1.08);transform-origin:0 6.60px;color:#000"><b>WFR_spectral-matrix_EuEu</b>&nbsp; <i>WFR Autocorrelation of the Electric Field U Axis from L2 CDFs</i></div><div class="t " style="left:55.20px;top:261.24px;font-size:7.8px;line-height:7.8px;transform:scaleY(1.08);transform-origin:0 6.60px;color:#000"><b>WFR_spectral-matrix_EvEv</b>&nbsp; <i>WFR Autocorrelation of the Electric Field V Axis from L2 CDFs</i></div><div class="t " style="left:55.20px;top:272.00px;font-size:7.8px;line-height:7.8px;transform:scaleY(1.08);transform-origin:0 6.60px;color:#000"><b>WFR_spectral-matrix_EwEw</b>&nbsp; <i>WFR Autocorrelation of the Electric Field W Axis from L2 CDFs</i></div><div class="t " style="left:55.20px;top:282.76px;font-size:7.8px;line-height:7.8px;transform:scaleY(1.08);transform-origin:0 6.60px;color:#000"><b>WFR_waveform-continuous-burst_psd</b>&nbsp; <i>Very long waveforms from L2 WFR data</i></div><div class="t " style="left:44.45px;top:293.52px;font-size:7.8px;line-height:7.8px;transform:scaleY(1.08);transform-origin:0 6.60px;color:#000"><b>L3</b>&nbsp; <i>Primary science data products from EMFISIS</i></div><div class="t " style="left:44.45px;top:304.28px;font-size:7.8px;line-height:7.8px;transform:scaleY(1.08);transform-origin:0 6.60px;color:#000"><b>L4</b>&nbsp; <i>Derived science products such as plasma density</i></div><svg class="a" style="left:0;top:0" width="433" height="307"><path d="M2.92 14.31 L5.67 17.06 L2.92 19.81" fill="none" stroke="#a8a8a8" stroke-width="0.85"/><path d="M2.92 25.07 L5.67 27.82 L2.92 30.57" fill="none" stroke="#a8a8a8" stroke-width="0.85"/><path d="M2.92 35.83 L5.67 38.58 L2.92 41.33" fill="none" stroke="#a8a8a8" stroke-width="0.85"/><path d="M2.92 46.59 L5.67 49.34 L2.92 52.09" fill="none" stroke="#a8a8a8" stroke-width="0.85"/><path d="M2.92 57.35 L5.67 60.10 L2.92 62.85" fill="none" stroke="#a8a8a8" stroke-width="0.85"/><path d="M2.92 68.11 L5.67 70.86 L2.92 73.61" fill="none" stroke="#a8a8a8" stroke-width="0.85"/><path d="M2.92 78.87 L5.67 81.62 L2.92 84.37" fill="none" stroke="#a8a8a8" stroke-width="0.85"/><path d="M2.92 89.63 L5.67 92.38 L2.92 95.13" fill="none" stroke="#a8a8a8" stroke-width="0.85"/><path d="M2.92 100.39 L5.67 103.14 L2.92 105.89" fill="none" stroke="#a8a8a8" stroke-width="0.85"/><path d="M2.92 111.15 L5.67 113.90 L2.92 116.65" fill="none" stroke="#a8a8a8" stroke-width="0.85"/><path d="M1.55 123.28 L4.30 126.03 L7.05 123.28" fill="none" stroke="#a8a8a8" stroke-width="0.85"/><path d="M12.30 134.05 L15.05 136.80 L17.80 134.05" fill="none" stroke="#a8a8a8" stroke-width="0.85"/><path d="M24.42 143.43 L27.17 146.18 L24.42 148.93" fill="none" stroke="#a8a8a8" stroke-width="0.85"/><path d="M23.05 155.56 L25.80 158.31 L28.55 155.56" fill="none" stroke="#a8a8a8" stroke-width="0.85"/><path d="M35.17 164.95 L37.92 167.70 L35.17 170.45" fill="none" stroke="#a8a8a8" stroke-width="0.85"/><path d="M33.80 177.09 L36.55 179.84 L39.30 177.09" fill="none" stroke="#a8a8a8" stroke-width="0.85"/><path d="M35.17 294.07 L37.92 296.82 L35.17 299.57" fill="none" stroke="#a8a8a8" stroke-width="0.85"/><path d="M35.17 304.83 L37.92 307.58 L35.17 310.33" fill="none" stroke="#a8a8a8" stroke-width="0.85"/></svg></div>
<div class="a" style="left:903.20px;top:85.60px;width:3.70px;height:242.30px;background:#dadada;border-radius:2px"></div>
<div class="a" style="left:474.20px;top:384.80px;width:433.20px;height:5.50px;background:#f4f4f4"></div>
<div class="a" style="left:481.60px;top:385.80px;width:409.80px;height:3.60px;background:#d9d9d9;border-radius:2px"></div>
<div class="t " style="left:472.90px;top:396.74px;font-size:7.63px;line-height:7.63px;transform:scaleY(1.15);transform-origin:0 6.46px;color:#000">Description:</div>
<div class="t " style="left:517.60px;top:396.57px;font-size:7.83px;line-height:7.83px;transform:scaleY(1.15);transform-origin:0 6.63px;color:#000">Electric Wave Spectra from 10 kHz to 490 kHz from L2 CDFs</div>
<div class="t " style="left:472.90px;top:412.72px;font-size:7.54px;line-height:7.54px;transform:scaleY(1.15);transform-origin:0 6.38px;color:#000">Time Range:</div>
<div class="a" style="left:520.20px;top:409.10px;width:308.20px;height:13.30px;background:#fff;border:1px solid #d0d0d0;border-radius:2px;box-sizing:border-box"></div>
<div class="a" style="left:815.30px;top:410.10px;width:12.10px;height:11.30px;background:#f7f7f7;border-left:1px solid #e2e2e2;box-sizing:border-box"></div>
<div class="t " style="left:524.20px;top:412.79px;font-size:7.69px;line-height:7.69px;transform:scaleY(1.15);transform-origin:0 6.51px;color:#1a1a1a">2012-09-25 16:00 to 19:00</div>
<div class="a" style="left:832.00px;top:411.80px;width:11.80px;height:10.10px;background:#e8eef6;border:1px solid #c8d4e4;box-sizing:border-box"></div>
<div class="a" style="left:834.00px;top:413.20px;width:7.80px;height:7.30px;background:#cfe0f4;border:1px solid #6c9ad6;box-sizing:border-box"></div>
<div class="a" style="left:834.00px;top:413.20px;width:7.80px;height:2.60px;background:#f07a2a"></div>
<div class="a" style="left:837.30px;top:416.80px;width:1.50px;height:1.50px;background:#3aa040"></div>
<div class="a" style="left:848.30px;top:409.30px;width:57.20px;height:13.10px;background:#fff;border:1px solid #cdcdcd;border-radius:2px;box-sizing:border-box"></div>
<div class="t " style="left:856.90px;top:413.89px;font-size:7.81px;line-height:7.81px;transform:scaleY(1.15);transform-origin:0 6.61px;color:#000">View DSDF</div>
<div class="t " style="left:485.70px;top:428.04px;font-size:6.45px;line-height:6.45px;transform:scaleY(1.1);transform-origin:0 5.46px;color:#000;-webkit-text-stroke:0.08px #222">valid range: 2012-08-31 to 2022-01-01</div>
<div class="a" style="left:649.10px;top:426.60px;width:194.40px;height:12.90px;background:#fff;border:1px solid #d4d4d4;border-bottom-color:#c0c0c0;border-radius:2px;box-sizing:border-box"></div>
<div class="t " style="left:652.60px;top:430.16px;font-size:7.73px;line-height:7.73px;transform:scaleY(1.15);transform-origin:0 6.54px;font-style:italic;color:#222">Example Time Ranges (1)</div>
<div class="t " style="left:472.90px;top:444.81px;font-size:7.55px;line-height:7.55px;transform:scaleY(1.15);transform-origin:0 6.39px;color:#000">Reader Parameters:</div>
<div class="a" style="left:473.40px;top:457.20px;width:370.60px;height:31.70px;background:#fff;border:1px solid #c8c8c8;box-sizing:border-box"></div>
<div class="a" style="left:839.00px;top:466.40px;width:3.00px;height:9.80px;background:#d0d0d0;border-radius:1.5px"></div>
<div class="a" style="left:848.40px;top:457.40px;width:60.20px;height:13.00px;background:#fff;border:1px solid #cdcdcd;border-radius:2px;box-sizing:border-box"></div>
<div class="t " style="left:856.70px;top:461.50px;font-size:7.8px;line-height:7.8px;transform:scaleY(1.15);transform-origin:0 6.60px;color:#000">Edit Params</div>
<div class="a" style="left:474.60px;top:495.40px;width:7.90px;height:7.40px;background:#fff;border:1px solid #d0d0d0;border-radius:1px;box-sizing:border-box"></div>
<div class="t " style="left:485.70px;top:496.17px;font-size:7.72px;line-height:7.72px;transform:scaleY(1.15);transform-origin:0 6.53px;color:#000">Force Intrinsic Resolution</div>
<div class="t " style="left:591.50px;top:496.27px;font-size:7.6px;line-height:7.6px;transform:scaleY(1.15);transform-origin:0 6.43px;color:#000">Resolution Limit (sec):</div>
<div class="a" style="left:672.70px;top:492.30px;width:41.70px;height:13.60px;background:#fff;border:1px solid #d8d8d8;border-radius:2px;box-sizing:border-box"></div>
<div class="t " style="left:676.60px;top:496.37px;font-size:7.6px;line-height:7.6px;transform:scaleY(1.15);transform-origin:0 6.43px;color:#000">900</div>
<div class="t " style="left:730.30px;top:496.40px;font-size:7.56px;line-height:7.56px;transform:scaleY(1.15);transform-origin:0 6.40px;color:#000">TCA Item:</div>
<div class="a" style="left:768.30px;top:492.20px;width:42.60px;height:13.70px;background:#fff;border:1px solid #d8d8d8;border-radius:2px;box-sizing:border-box"></div>
<div class="a" style="left:798.50px;top:493.20px;width:11.40px;height:11.70px;background:#f6f6f6;border-left:1px solid #dcdcdc;box-sizing:border-box"></div>
<div class="a" style="left:691.60px;top:515.50px;width:55.40px;height:12.90px;background:#fff;border:1px solid #cdcdcd;border-radius:2px;box-sizing:border-box"></div>
<div class="t " style="left:707.60px;top:519.47px;font-size:7.6px;line-height:7.6px;transform:scaleY(1.15);transform-origin:0 6.43px;color:#000">Cancel</div>
<div class="a" style="left:751.40px;top:515.50px;width:44.90px;height:12.90px;background:#fff;border:1px solid #cdcdcd;border-radius:2px;box-sizing:border-box"></div>
<div class="t " style="left:759.90px;top:519.65px;font-size:7.38px;line-height:7.38px;transform:scaleY(1.15);transform-origin:0 6.25px;color:#000">Overplot</div>
<div class="a" style="left:800.60px;top:515.40px;width:54.80px;height:12.80px;background:#fff;border:1px solid #cdcdcd;border-radius:2px;box-sizing:border-box"></div>
<div class="t " style="left:809.60px;top:519.47px;font-size:7.6px;line-height:7.6px;transform:scaleY(1.15);transform-origin:0 6.43px;color:#000">Plot Below</div>
<div class="a" style="left:859.50px;top:513.50px;width:48.60px;height:16.60px;background:#fff;border:1px solid #c4c4c4;border-radius:2px;box-sizing:border-box"></div>
<svg class="a" style="left:872px;top:517px" width="9" height="10"><path d="M1.1 1.4 L7.6 5 L1.1 8.6 Z" fill="#3e9a4a"/></svg>
<div class="t " style="left:883.60px;top:519.47px;font-size:7.6px;line-height:7.6px;transform:scaleY(1.15);transform-origin:0 6.43px;color:#000">Plot</div>
<svg class="a" style="left:0;top:0" width="913" height="538"><path d="M902.90 81.85 L905.00 79.75 L907.10 81.85" fill="none" stroke="#888" stroke-width="0.75"/><path d="M902.90 379.95 L905.00 382.05 L907.10 379.95" fill="none" stroke="#888" stroke-width="0.75"/><path d="M478.80 385.10 L476.40 387.50 L478.80 389.90" fill="none" stroke="#888" stroke-width="0.8"/><path d="M897.10 385.10 L899.50 387.50 L897.10 389.90" fill="none" stroke="#888" stroke-width="0.8"/><path d="M898.30 46.40 L901.50 49.60 L904.70 46.40" fill="none" stroke="#666" stroke-width="0.9"/><path d="M818.60 414.40 L821.80 417.60 L825.00 414.40" fill="none" stroke="#666" stroke-width="0.9"/><path d="M834.60 431.90 L837.80 435.10 L841.00 431.90" fill="none" stroke="#666" stroke-width="0.9"/><path d="M801.80 497.60 L804.60 500.40 L807.40 497.60" fill="none" stroke="#777" stroke-width="0.8"/><path d="M838.50 462.50 L840.70 460.30 L842.90 462.50" fill="none" stroke="#777" stroke-width="0.7"/><path d="M838.50 483.20 L840.70 485.40 L842.90 483.20" fill="none" stroke="#777" stroke-width="0.7"/></svg>
<svg class="a" style="left:700px;top:500px" width="40" height="38"><path d="M14.2 10.4 L14.5 27.3 L19.9 23.9 L25.3 35.6 L30.0 33.0 L24.7 21.9 L29.9 19.9 Z" fill="#f2f2f2" stroke="#0e0e0e" stroke-width="2.05" stroke-linejoin="round"/></svg>
</body></html>
